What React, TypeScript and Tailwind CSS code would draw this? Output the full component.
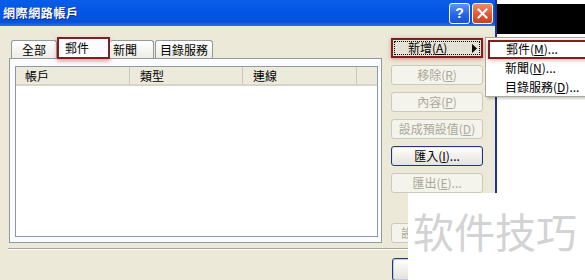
import React from "react";

function Btn({ children, kind }: { children: React.ReactNode; kind: "dis" | "en" }) {
  if (kind === "dis") {
    return (
      <div className="h-[20px] w-[92px] shrink-0 rounded-[3px] border border-[#CBC9BD] bg-[#F4F3EC] text-[#ACA899] flex items-center justify-center text-[12px] leading-none">
        {children}
      </div>
    );
  }
  return (
    <div className="h-[20px] w-[92px] shrink-0 rounded-[3px] border border-[#22386A] bg-linear-to-b from-white to-[#E4E2DA] shadow-[inset_0_0_0_1px_#DCE6F7] text-black flex items-center justify-center text-[12px] leading-none">
      {children}
    </div>
  );
}

export default function App() {
  return (
    <div className="relative w-[585px] h-[280px] overflow-hidden bg-white flex font-['Noto_Sans_CJK_TC','Noto_Sans_CJK_SC',sans-serif] text-[12px] text-black">
      {/* Dialog */}
      <div className="w-[497px] h-full shrink-0 flex flex-col bg-[#ECE9D8] border-r-2 border-[#1B3590]">
        {/* Title bar */}
        <div className="h-[26px] shrink-0 flex items-center justify-between pl-[3px] pr-[2px] bg-[linear-gradient(180deg,#0A5DE6_0%,#0256E4_45%,#0553DA_85%,#2F72E8_100%)]">
          <span className="text-white font-bold text-[12px] tracking-[0.6px] leading-none [text-shadow:1px_1px_0_#0B2C8A]">網際網路帳戶</span>
          <div className="flex gap-[2px]">
            <div className="w-[21px] h-[21px] rounded-[3px] border border-white bg-[linear-gradient(180deg,#5A94F5_0%,#2563E6_60%,#1A54D8_100%)] flex items-center justify-center text-white font-bold text-[14px] leading-none font-['Liberation_Sans',sans-serif]">?</div>
            <div className="w-[21px] h-[21px] rounded-[3px] border border-white bg-[linear-gradient(180deg,#EB8A6E_0%,#DD5A38_55%,#C8441F_100%)] flex items-center justify-center">
              <svg width="11" height="11" viewBox="0 0 11 11">
                <path d="M1.5 1.5 L9.5 9.5 M9.5 1.5 L1.5 9.5" stroke="white" strokeWidth="2" strokeLinecap="square" />
              </svg>
            </div>
          </div>
        </div>

        {/* Body */}
        <div className="flex pt-[10px] pl-[9px]">
          {/* Left: tabs + panel */}
          <div className="w-[373px] flex flex-col">
            <div className="h-[22px] flex items-end pl-[2px] relative z-10">
              <div className="w-[46px] h-[18px] rounded-t-[3px] border-t border-l border-r border-[#919B9C] bg-linear-to-b from-white to-[#EDECE5] flex items-center justify-center leading-none">全部</div>
              <div className="w-[53px] h-[22px] -mb-[1px] border-2 border-[#7A2222] bg-[#FCFCFE] shadow-[0_2px_4px_rgba(200,70,70,0.55)] flex items-center pl-[6px] leading-none">郵件</div>
              <div className="w-[44px] h-[18px] rounded-t-[3px] border-t border-r border-[#919B9C] bg-linear-to-b from-white to-[#EDECE5] flex items-center pl-[3px] leading-none">新聞</div>
              <div className="ml-[1px] w-[58px] h-[18px] rounded-t-[3px] border-t border-l border-r border-[#919B9C] bg-linear-to-b from-white to-[#EDECE5] flex items-center justify-center leading-none">目錄服務</div>
            </div>
            <div className="h-[185px] border border-[#919B9C] bg-[#FCFCFE] pt-[7px] pl-[5px] pr-[3px] pb-[5px] flex">
              <div className="flex-1 border border-[#8A9AA8] bg-white flex flex-col">
                <div className="h-[19px] flex bg-[#EBEADB] border-b-2 border-[#D8D4C6]">
                  <div className="w-[114px] h-full flex items-center pl-[9px] leading-none border-r border-[#CBC7B8]">帳戶</div>
                  <div className="w-[113px] h-full flex items-center pl-[10px] leading-none border-r border-[#CBC7B8]">類型</div>
                  <div className="w-[114px] h-full flex items-center pl-[10px] leading-none border-r border-[#CBC7B8]">連線</div>
                  <div className="flex-1" />
                </div>
              </div>
            </div>
          </div>

          {/* Right: buttons */}
          <div className="ml-[9px] pt-[2px] flex flex-col">
            <div className="flex flex-col gap-[7px]">
              <div className="h-[20px] w-[92px] border-2 border-[#7A2222] bg-[#E4E1D5] shadow-[0_1px_4px_rgba(200,70,70,0.6)] p-[1px]">
                <div className="h-full w-full border border-dotted border-black flex items-center justify-between pl-[13px] pr-[2px] leading-none">
                  <span>新增(<u>A</u>)</span>
                  <svg width="5" height="9" viewBox="0 0 5 9"><path d="M0 0 L5 4.5 L0 9 Z" fill="black" /></svg>
                </div>
              </div>
              <Btn kind="dis">移除(<u>R</u>)</Btn>
              <Btn kind="dis">內容(<u>P</u>)</Btn>
              <Btn kind="dis">設成預設值(<u>D</u>)</Btn>
              <Btn kind="en">匯入(<u>I</u>)...</Btn>
              <Btn kind="dis">匯出(<u>E</u>)...</Btn>
            </div>
            <div className="mt-[30px] h-[20px] w-[92px] rounded-[3px] border border-[#CBC9BD] bg-[#F4F3EC] text-[#ACA899] flex items-center pl-[9px] leading-none">
              設
            </div>
          </div>
        </div>

        {/* Separator */}
        <div className="mt-[5px] ml-[8px] mr-[8px] h-[2px] border-t border-[#ACA899] border-b border-b-white" />

        {/* Bottom row */}
        <div className="mt-[8px] pl-[392px]">
          <div className="h-[23px] w-[75px] rounded-[3px] border border-[#22386A] bg-linear-to-b from-white to-[#E4E2DA] shadow-[inset_0_0_0_1px_#B9CDF3]" />
        </div>
      </div>

      {/* Outside area */}
      <div className="flex-1 flex flex-col">
        <div className="h-[4px] bg-white" />
        <div className="h-[30px] bg-black" />
        <div className="flex-1 bg-white" />
      </div>

      {/* Submenu */}
      <div className="absolute left-[485px] top-[37px] w-[110px] h-[60px] bg-white border border-[#ACA899] shadow-[2px_2px_2px_rgba(0,0,0,0.2)] pt-[2px] flex flex-col">
        <div className="h-[19px] ml-[2px] border-2 border-[#7A2222] shadow-[0_1px_4px_rgba(200,70,70,0.5)] flex items-center pl-[16px] leading-none">郵件(<u>M</u>)...</div>
        <div className="h-[19px] flex items-center pl-[19px] leading-none">新聞(<u>N</u>)...</div>
        <div className="h-[19px] flex items-center pl-[19px] leading-none">目錄服務(<u>D</u>)...</div>
      </div>

      {/* Watermark */}
      <div className="absolute left-[408px] top-[193px] right-0 bottom-0 bg-white pl-[5px] pt-[17px]">
        <div className="text-[41px] leading-none text-[#D3D3D3] font-['Noto_Sans_CJK_SC',sans-serif] whitespace-nowrap">软件技巧</div>
      </div>
    </div>
  );
}
